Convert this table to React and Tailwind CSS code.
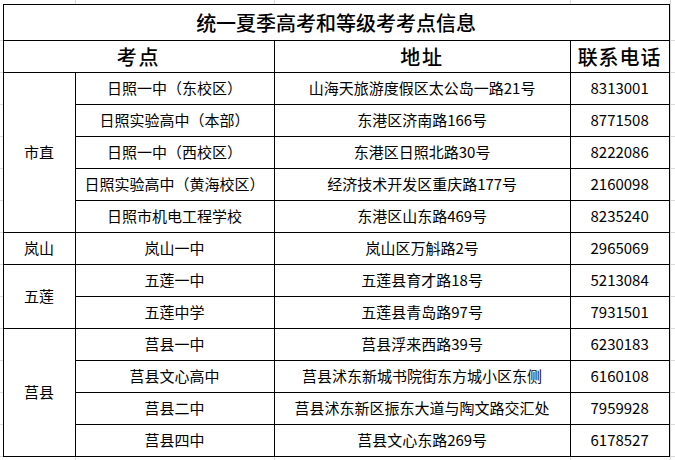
const rows = [
  { district: "市直", span: 5, school: "日照一中（东校区）", address: "山海天旅游度假区太公岛一路21号", phone: "8313001" },
  { school: "日照实验高中（本部）", address: "东港区济南路166号", phone: "8771508" },
  { school: "日照一中（西校区）", address: "东港区日照北路30号", phone: "8222086" },
  { school: "日照实验高中（黄海校区）", address: "经济技术开发区重庆路177号", phone: "2160098" },
  { school: "日照市机电工程学校", address: "东港区山东路469号", phone: "8235240" },
  { district: "岚山", span: 1, school: "岚山一中", address: "岚山区万斛路2号", phone: "2965069" },
  { district: "五莲", span: 2, school: "五莲一中", address: "五莲县育才路18号", phone: "5213084" },
  { school: "五莲中学", address: "五莲县青岛路97号", phone: "7931501" },
  { district: "莒县", span: 4, school: "莒县一中", address: "莒县浮来西路39号", phone: "6230183" },
  { school: "莒县文心高中", address: "莒县沭东新城书院街东方城小区东侧", phone: "6160108" },
  { school: "莒县二中", address: "莒县沭东新区振东大道与陶文路交汇处", phone: "7959928" },
  { school: "莒县四中", address: "莒县文心东路269号", phone: "6178527" },
];

const spanClass = { 1: "row-span-1", 2: "row-span-2", 4: "row-span-4", 5: "row-span-5" };

function Cell({ className = "", children }) {
  return (
    <div className={"flex items-center justify-center bg-white whitespace-nowrap " + className}>
      {children}
    </div>
  );
}

function Strip() {
  return (
    <div className="flex h-[4px] shrink-0">
      <div className="w-[76px] border-r border-[#d9d9d9]" />
      <div className="w-[199px] border-r border-[#d9d9d9]" />
      <div className="w-[296px] border-r border-[#d9d9d9]" />
      <div className="w-[100px] border-r border-[#d9d9d9]" />
    </div>
  );
}

function SideStrip({ className = "" }) {
  return (
    <div className={"flex flex-col " + className}>
      <div className="h-[37px] border-b border-[#d9d9d9]" />
      {Array.from({ length: 13 }).map((_, i) => (
        <div key={i} className="h-[32px] border-b border-[#d9d9d9]" />
      ))}
    </div>
  );
}

export default function App() {
  let rowStart = 3;
  return (
    <div
      className="w-[675px] h-[460px] overflow-hidden bg-white text-black"
      style={{ fontFamily: '"Noto Sans CJK SC", "Noto Sans", sans-serif' }}
    >
      <Strip />
      <div className="flex">
        <SideStrip className="w-[3px]" />
        <div className="grid grid-cols-[71px_198px_295px_98px] grid-rows-[35px_31px_repeat(12,31px)] gap-px bg-black p-px">
          <Cell className="col-span-4 text-[20px] font-medium">统一夏季高考和等级考考点信息</Cell>
          <Cell className="col-span-2 text-[20px] font-medium tracking-[2px]">考点</Cell>
          <Cell className="text-[20px] font-medium tracking-[2px]">地址</Cell>
          <Cell className="text-[20px] font-medium tracking-[1px]">联系电话</Cell>
          {rows.map((r, i) => {
            const row = rowStart + i;
            return [
              r.district ? (
                <Cell key={"d" + i} className={"col-start-1 text-[15px] " + spanClass[r.span]}>
                  {r.district}
                </Cell>
              ) : null,
              <Cell key={"s" + i} className="col-start-2 text-[15px]">{r.school}</Cell>,
              <Cell key={"a" + i} className="text-[15px]">{r.address}</Cell>,
              <Cell key={"p" + i} className="text-[15px]">{r.phone}</Cell>,
            ];
          })}
        </div>
        <SideStrip className="w-[6px] border-l border-[#d9d9d9]" />
      </div>
      <Strip />
    </div>
  );
}
